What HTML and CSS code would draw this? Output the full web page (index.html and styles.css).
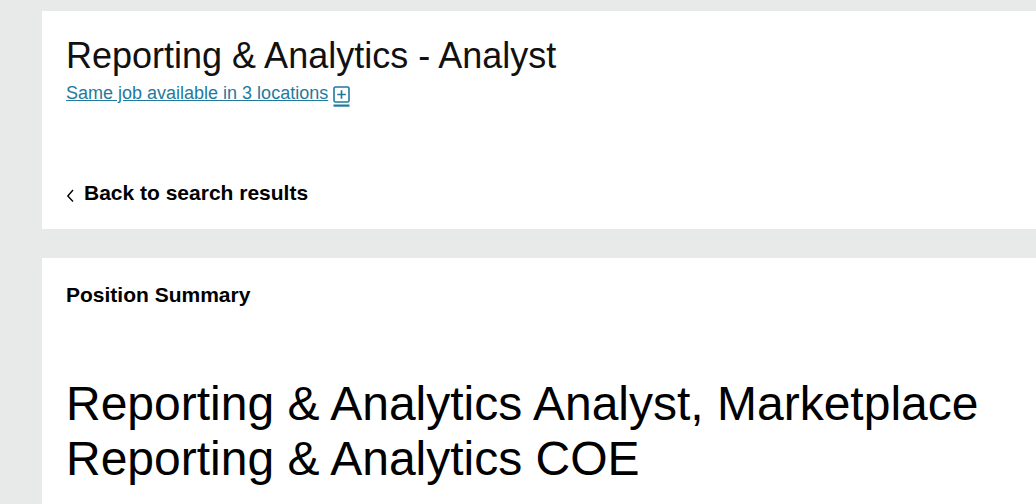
FILE: index.html
```html
<!DOCTYPE html>
<html>
<head>
<meta charset="utf-8">
<link rel="stylesheet" href="styles.css">
</head>
<body>
<div class="page">
  <section class="card header-card">
    <h1 class="job-title">Reporting &amp; Analytics - Analyst</h1>
    <a class="locations-link" href="#"><span class="link-text">Same job available in 3 locations</span><svg class="plus-icon" width="17" height="22" viewBox="0 0 17 22"><rect x="1" y="1" width="15" height="15" rx="1.5" fill="none" stroke="currentColor" stroke-width="1.6"/><path d="M8.5 4.2v8.6M4.2 8.5h8.6" stroke="currentColor" stroke-width="1.7" fill="none"/><rect x="0.5" y="18.5" width="16" height="2.2" fill="currentColor"/></svg></a>
    <a class="back-link" href="#"><svg class="chev" width="9" height="14" viewBox="0 0 9 14"><path d="M7 2 L1.8 8 L7 13.5" fill="none" stroke="#000" stroke-width="1.4"/></svg><span>Back to search results</span></a>
  </section>
  <section class="card summary-card">
    <h2 class="section-label">Position Summary</h2>
    <h3 class="big-heading">Reporting &amp; Analytics Analyst, Marketplace Reporting &amp; Analytics COE</h3>
  </section>
</div>
</body>
</html>
```
FILE: styles.css
```css
html, body {
  margin: 0;
  padding: 0;
  background: #e8e9e9;
  font-family: "Liberation Sans", Arial, sans-serif;
  color: #000;
  overflow: hidden;
}
.page {
  padding: 11px 0 0 42px;
  display: flex;
  flex-direction: column;
  gap: 29px;
}
.card {
  background: #fff;
  padding: 0 24px;
}
.header-card {
  padding-top: 24px;
  padding-bottom: 24px;
  display: flex;
  flex-direction: column;
  align-items: flex-start;
}
.job-title {
  margin: 0;
  font-size: 36px;
  font-weight: normal;
  line-height: 42px;
  color: #111;
}
.locations-link {
  margin-top: 6px;
  height: 21px;
  font-size: 18px;
  line-height: 21px;
  color: #1f7a9e;
  display: flex;
  align-items: flex-start;
  text-decoration: none;
}
.link-text {
  text-decoration: underline;
}
.plus-icon {
  margin-left: 5px;
  margin-top: 3px;
  flex-shrink: 0;
}
.back-link {
  margin-top: 77px;
  display: flex;
  align-items: center;
  gap: 9px;
  font-size: 21px;
  font-weight: bold;
  line-height: 24px;
  color: #000;
  text-decoration: none;
}
.chev {
  margin-top: 4px;
}
.summary-card {
  padding-top: 25px;
  padding-bottom: 40px;
}
.section-label {
  margin: 0;
  font-size: 21px;
  font-weight: bold;
  line-height: 24px;
}
.big-heading {
  margin: 69px 0 0;
  font-size: 48px;
  font-weight: normal;
  line-height: 55px;
}
```
